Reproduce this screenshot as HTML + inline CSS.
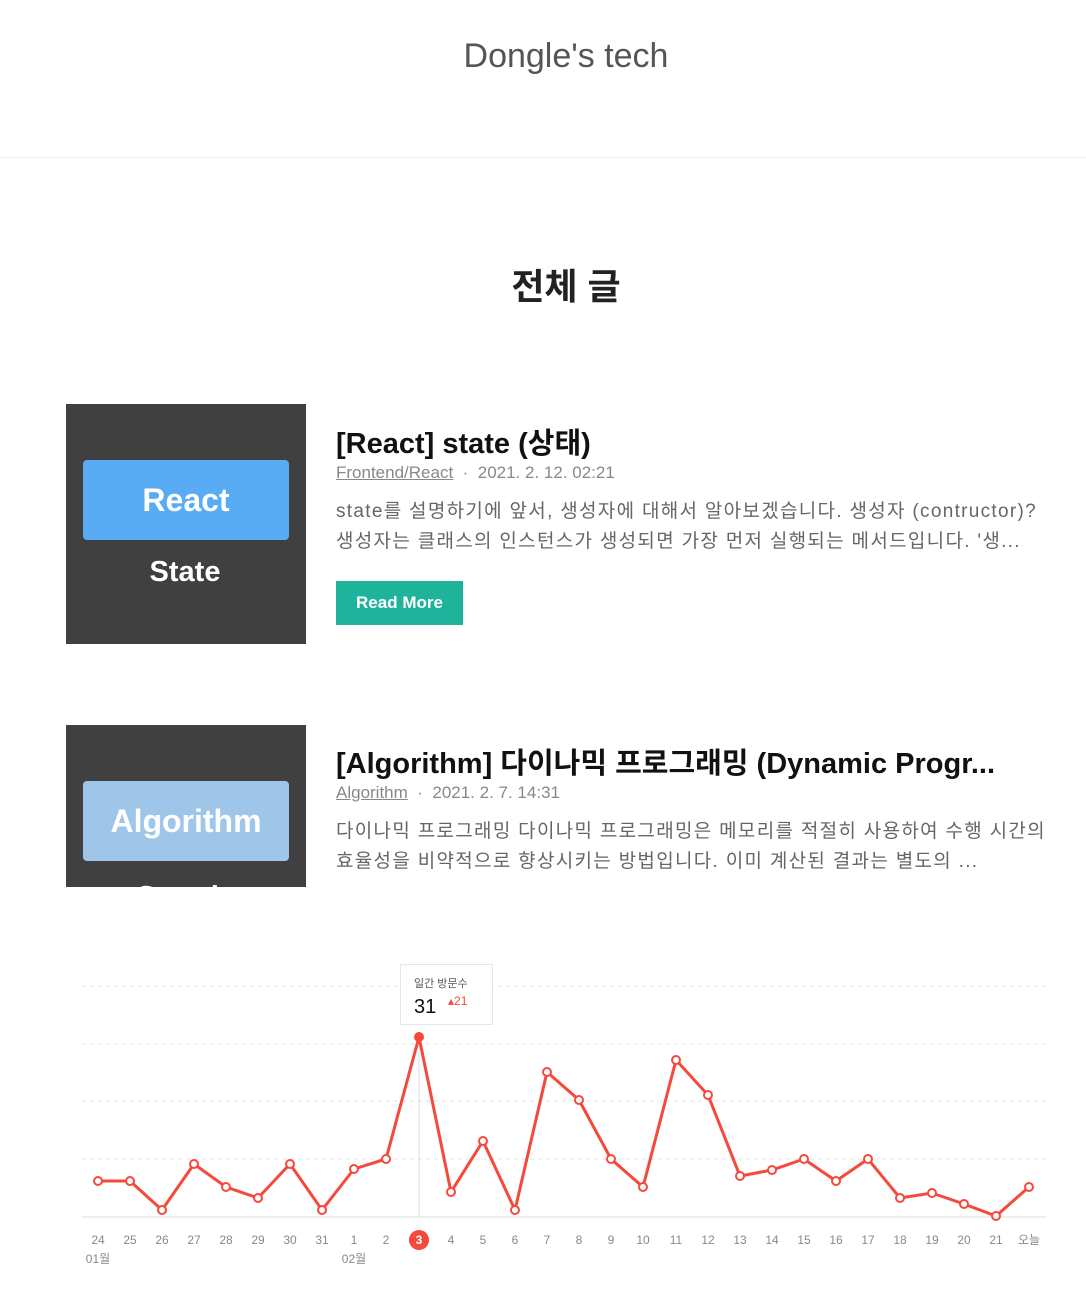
<!DOCTYPE html>
<html><head><meta charset="utf-8"><style>
*{margin:0;padding:0;box-sizing:border-box}
body{width:1086px;height:1314px;background:#fff;font-family:"Liberation Sans","Noto Sans CJK KR",sans-serif;position:relative;overflow:hidden}
.a{position:absolute}
.hdr{left:0;top:0;width:1086px;height:158px;border-bottom:1px solid #eee}
.logo{left:0;width:1132px;top:37px;text-align:center;font-size:34px;color:#555}
h1{position:absolute;left:0;width:1132px;top:258px;text-align:center;font-size:36px;color:#222;font-weight:bold}
.thumb{background:#404040;overflow:hidden}
.box{position:absolute;left:17px;width:206px;height:80px;border-radius:4px;color:#fff;font-weight:900;font-size:32px;text-align:center;line-height:80px;font-family:"Liberation Sans",sans-serif}
.t{font-size:29px;color:#111;font-weight:bold;white-space:nowrap}
.m{font-size:17px;color:#888}
.m u{color:#888}
.d{font-size:19px;color:#666;line-height:30px;width:724px;letter-spacing:1.3px;word-break:break-all}
.btn{background:#1fb39c;color:#fff;font-weight:bold;font-size:17px;text-align:center;line-height:44px}
</style></head><body>
<div class="a hdr"></div>
<div class="a logo">Dongle's tech</div>
<h1>전체 글</h1>

<div class="a thumb" style="left:66px;top:404px;width:240px;height:240px">
<div class="box" style="top:56px;background:#59acf3">React</div>
<div style="position:absolute;left:0;width:238px;top:152px;text-align:center;color:#fff;font-weight:900;font-size:29px">State</div>
</div>
<div class="a t" style="left:336px;top:420px">[React] state (상태)</div>
<div class="a m" style="left:336px;top:463px"><u>Frontend/React</u> &nbsp;·&nbsp; 2021. 2. 12. 02:21</div>
<div class="a d" style="left:336px;top:497px">state를 설명하기에 앞서, 생성자에 대해서 알아보겠습니다. 생성자 (contructor)? 생성자는 클래스의 인스턴스가 생성되면 가장 먼저 실행되는 메서드입니다. '생...</div>
<div class="a btn" style="left:336px;top:581px;width:127px;height:44px">Read More</div>

<div class="a thumb" style="left:66px;top:725px;width:240px;height:162px">
<div class="box" style="top:56px;background:#9fc5e8">Algorithm</div>
<div style="position:absolute;left:0;width:238px;top:156px;text-align:center;color:#fff;font-weight:900;font-size:29px">Greedy</div>
</div>
<div class="a t" style="left:336px;top:740px">[Algorithm] 다이나믹 프로그래밍 (Dynamic Progr...</div>
<div class="a m" style="left:336px;top:783px"><u>Algorithm</u> &nbsp;·&nbsp; 2021. 2. 7. 14:31</div>
<div class="a d" style="left:336px;top:817px">다이나믹 프로그래밍 다이나믹 프로그래밍은 메모리를 적절히 사용하여 수행 시간의 효율성을 비약적으로 향상시키는 방법입니다. 이미 계산된 결과는 별도의 ...</div>

<svg class="a" style="left:0;top:0" width="1086" height="1314">
<g stroke="#e3e3e3" stroke-dasharray="4 4"><line x1="82" x2="1046" y1="986" y2="986"/><line x1="82" x2="1046" y1="1044" y2="1044"/><line x1="82" x2="1046" y1="1101" y2="1101"/><line x1="82" x2="1046" y1="1159" y2="1159"/></g>
<line x1="82" x2="1046" y1="1217" y2="1217" stroke="#ddd"/>
<line x1="419" x2="419" y1="1037" y2="1217" stroke="#ddd"/>
<polyline fill="none" stroke="#f5493c" stroke-width="3" points="98,1181 130,1181 162,1210 194,1164 226,1187 258,1198 290,1164 322,1210 354,1169 386,1159 419,1037 451,1192 483,1141 515,1210 547,1072 579,1100 611,1159 643,1187 676,1060 708,1095 740,1176 772,1170 804,1159 836,1181 868,1159 900,1198 932,1193 964,1204 996,1216 1029,1187"/>
<g fill="#fff" stroke="#f5493c" stroke-width="2">
<circle cx="98" cy="1181" r="4"/><circle cx="130" cy="1181" r="4"/><circle cx="162" cy="1210" r="4"/><circle cx="194" cy="1164" r="4"/><circle cx="226" cy="1187" r="4"/><circle cx="258" cy="1198" r="4"/><circle cx="290" cy="1164" r="4"/><circle cx="322" cy="1210" r="4"/><circle cx="354" cy="1169" r="4"/><circle cx="386" cy="1159" r="4"/><circle cx="451" cy="1192" r="4"/><circle cx="483" cy="1141" r="4"/><circle cx="515" cy="1210" r="4"/><circle cx="547" cy="1072" r="4"/><circle cx="579" cy="1100" r="4"/><circle cx="611" cy="1159" r="4"/><circle cx="643" cy="1187" r="4"/><circle cx="676" cy="1060" r="4"/><circle cx="708" cy="1095" r="4"/><circle cx="740" cy="1176" r="4"/><circle cx="772" cy="1170" r="4"/><circle cx="804" cy="1159" r="4"/><circle cx="836" cy="1181" r="4"/><circle cx="868" cy="1159" r="4"/><circle cx="900" cy="1198" r="4"/><circle cx="932" cy="1193" r="4"/><circle cx="964" cy="1204" r="4"/><circle cx="996" cy="1216" r="4"/><circle cx="1029" cy="1187" r="4"/>
</g>
<circle cx="419" cy="1037" r="5" fill="#f5493c"/>
<rect x="400.5" y="964.5" width="92" height="60" fill="#fff" stroke="#e2e6ee"/>
<text x="414" y="987" font-size="11" fill="#555">일간 방문수</text>
<text x="414" y="1013" font-size="20" fill="#111">31</text>
<text x="448" y="1005" font-size="12" fill="#f5493c">▴21</text>
<circle cx="419" cy="1240" r="10" fill="#f5493c"/>
<g font-size="12" fill="#888" text-anchor="middle">
<text x="98" y="1244">24</text><text x="130" y="1244">25</text><text x="162" y="1244">26</text><text x="194" y="1244">27</text><text x="226" y="1244">28</text><text x="258" y="1244">29</text><text x="290" y="1244">30</text><text x="322" y="1244">31</text><text x="354" y="1244">1</text><text x="386" y="1244">2</text><text x="419" y="1244" fill="#fff" font-weight="bold">3</text><text x="451" y="1244">4</text><text x="483" y="1244">5</text><text x="515" y="1244">6</text><text x="547" y="1244">7</text><text x="579" y="1244">8</text><text x="611" y="1244">9</text><text x="643" y="1244">10</text><text x="676" y="1244">11</text><text x="708" y="1244">12</text><text x="740" y="1244">13</text><text x="772" y="1244">14</text><text x="804" y="1244">15</text><text x="836" y="1244">16</text><text x="868" y="1244">17</text><text x="900" y="1244">18</text><text x="932" y="1244">19</text><text x="964" y="1244">20</text><text x="996" y="1244">21</text><text x="1029" y="1244">오늘</text>
<text x="98" y="1263">01월</text><text x="354" y="1263">02월</text>
</g>
</svg>
</body></html>
